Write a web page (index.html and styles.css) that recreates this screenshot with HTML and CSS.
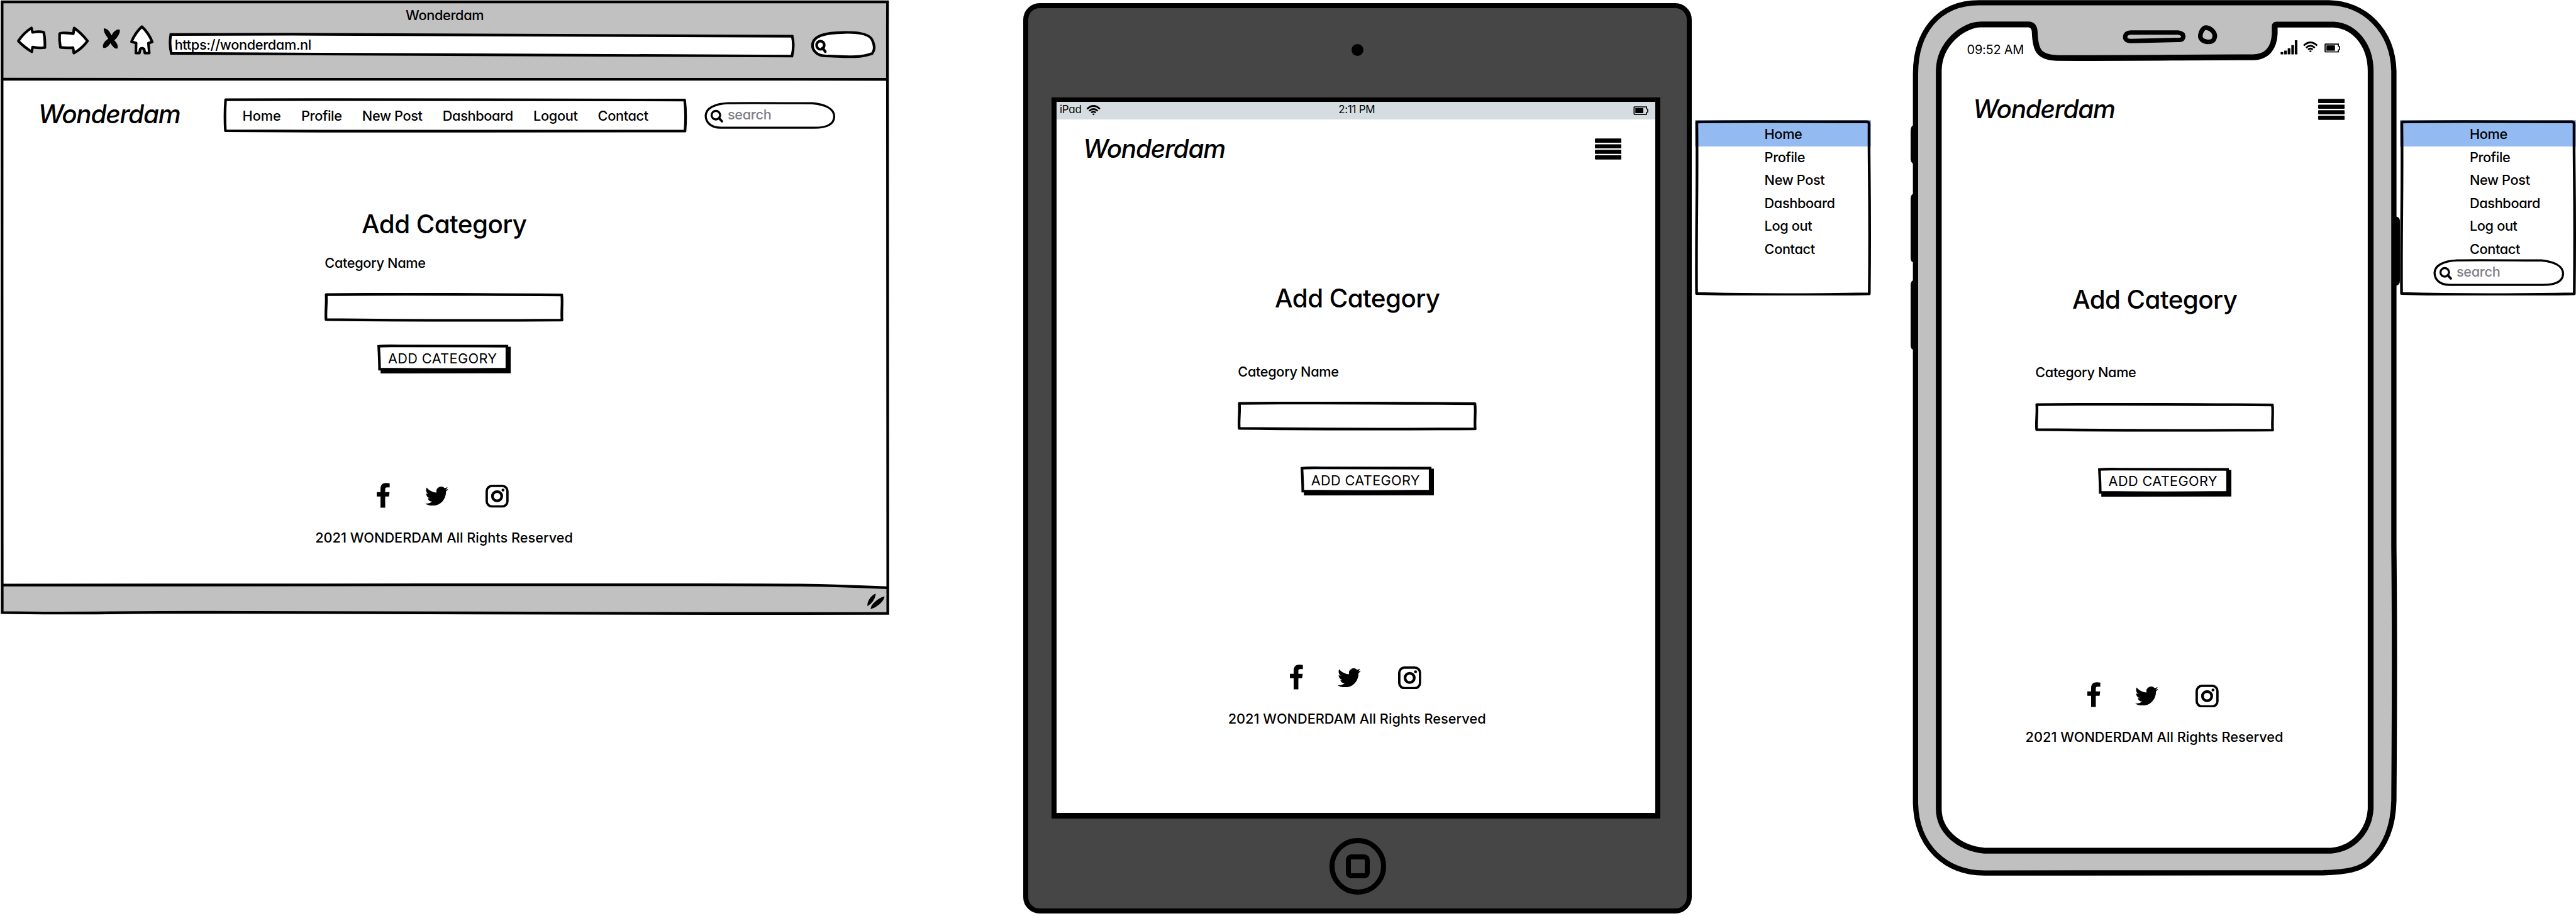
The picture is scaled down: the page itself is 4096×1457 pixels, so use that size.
FILE: index.html
```html
<!DOCTYPE html>
<html lang="en">
<head>
<meta charset="utf-8">
<title>Wonderdam – Add Category</title>
<link rel="stylesheet" href="styles.css">
</head>
<body>
<svg class="defs" aria-hidden="true">
  <symbol id="facebook" viewBox="0 0 24 46"><path d="M23.8 1V8.2H19C16.5 8.2 15.5 9.3 15.5 11.5V17H23.5L22.4 25H15.5V45.4H6.9V25H0V17H6.9V11C6.9 3.5 11 0 17.5 0.2Q21 .2 23.8 1Z"/></symbol>
  <symbol id="twitter" viewBox="0 2.2 24 19.6" preserveAspectRatio="none"><path d="M23.953 4.57a10 10 0 01-2.825.775 4.958 4.958 0 002.163-2.723c-.951.555-2.005.959-3.127 1.184a4.92 4.92 0 00-8.384 4.482C7.69 8.095 4.067 6.13 1.64 3.162a4.822 4.822 0 00-.666 2.475c0 1.71.87 3.213 2.188 4.096a4.904 4.904 0 01-2.228-.616v.06a4.923 4.923 0 003.946 4.827 4.996 4.996 0 01-2.212.085 4.936 4.936 0 004.604 3.417 9.867 9.867 0 01-6.102 2.105c-.39 0-.779-.023-1.17-.067a13.995 13.995 0 007.557 2.209c9.053 0 13.998-7.496 13.998-13.985 0-.21 0-.42-.015-.63A9.935 9.935 0 0024 4.59z"/></symbol>
  <symbol id="instagram" viewBox="0 0 42.4 42"><rect x="2.2" y="2.2" width="38" height="37.6" rx="9.5" fill="none" stroke="#000" stroke-width="4.4"/><circle cx="21.2" cy="21" r="8.5" fill="none" stroke="#000" stroke-width="5"/><circle cx="32" cy="9.8" r="2.7"/></symbol>
  <symbol id="wifi" viewBox="0 0 27 20"><g fill="none" stroke="#000" stroke-width="3.2"><path d="M1.2 7.6Q13.5-4 25.8 7.6"/><path d="M5.4 11.4Q13.5 4 21.6 11.4"/><path d="M9.2 14.8Q13.5 11 17.8 14.8"/></g><path d="M11 17.2Q13.5 15.6 16 17.2L13.5 20Z"/></symbol>
  <symbol id="battery" viewBox="0 0 29 17"><path d="M2 1.2H25.4V4.6L27.7 6V11L25.4 12.4V15.8H2Q1.2 15.8 1.2 15V2Q1.2 1.2 2 1.2Z" fill="none" stroke="#000" stroke-width="2"/><rect x="3.6" y="3.6" width="15.6" height="9.8"/></symbol>
  <symbol id="bars" viewBox="0 0 49 39"><rect y=".4" width="49" height="7.6" rx="1.5"/><rect y="10.8" width="49" height="7.6" rx="1.5"/><rect y="21" width="49" height="7.6" rx="1.5"/><rect y="31.2" width="49" height="7.6" rx="1.5"/></symbol>
  <symbol id="box-input" viewBox="0 0 437 53" preserveAspectRatio="none"><path d="M3 3C140 1.6 300 2.6 434 3.6C436 18 433 34 434.5 50C300 51 150 51 2.8 49.2C1.4 34 4.4 18 3 3Z" fill="#fff" stroke="#000" stroke-width="5" stroke-linejoin="round"/></symbol>
  <symbol id="box-button" viewBox="0 0 244 53" preserveAspectRatio="none"><path d="M6 4H244V52.6L6 53Z"/><path d="M2.5 3.2Q10 2.2 40 2.6L237 3V45Q120 46.6 4 45Q4 30 2.5 3.2Z" fill="#fff" stroke="#000" stroke-width="4.8"/></symbol>
  <symbol id="box-menu" viewBox="0 0 322 321" preserveAspectRatio="none"><path d="M3.5 3.4C100 2 240 3.4 315 3.2Q318.6 3.4 318.6 7C318 100 321 140 319 318C200 320 80 319.5 3 317.4C2 200 5 120 3.5 3.4Z" fill="none" stroke="#000" stroke-width="5" stroke-linejoin="round"/></symbol>
  <symbol id="box-search" viewBox="0 0 240 50"><path d="M44 2.4C90 1.6 150 2.6 198 2.6C222 5 237.6 13 237.6 27C237 42 222 47.6 200 47.4H30C10 47.4 2.4 36 2.4 25C3 12 18 3.4 44 2.4Z" fill="#fff" stroke="#000" stroke-width="3.8"/><circle cx="21" cy="24.4" r="7.8" fill="none" stroke="#000" stroke-width="3.8"/><path d="M26.5 29.5L32.2 35.6" stroke="#000" stroke-width="4.4" stroke-linecap="round"/></symbol>
</svg>

<main class="board">

  <section class="browser">
    <svg class="frame" viewBox="0 0 1627 1126">
      <path d="M4 4H1623V145H4Z" fill="#c1c1c1"/>
      <path d="M4 1071C120 1073 600 1069 1000 1069.6S1450 1068 1623 1075V1122H4Z" fill="#c1c1c1"/>
      <g fill="none" stroke="#000" stroke-width="5">
        <path d="M3.8 3.5H1623.5C1622 400 1625 800 1624 1122.4C1200 1123.4 700 1121.6 450 1120.6S160 1123.6 4 1121C5 700 2.6 400 3.8 3.5Z"/>
        <path d="M4 145C400 147 900 145.6 1623 145.2"/>
        <path d="M5 1070.6C120 1073 600 1069.6 1000 1070S1450 1068 1623 1075.4"/>
      </g>
      <path d="M1601 1087.5C1594 1090 1587 1101 1587.5 1107.8C1594 1104 1600 1096 1601 1087.5ZM1617 1092.5C1607 1095 1594 1106 1593.5 1113.5C1604 1110 1615 1101 1617 1092.5Z" stroke="#000" stroke-width="1.6"/>
    </svg>
    <header class="chrome">
      <div class="chrome-title">Wonderdam</div>
      <div class="toolbar">
        <svg class="tool back" viewBox="28 44 62 64"><path d="M34 75.3Q44 60 58 51.5L60 59.5Q72 57 80.5 59.5Q83 72 82.5 87.5Q72 89 60 86.4L58.5 95Q44 86 34 75.3Z"/></svg>
        <svg class="tool forward" viewBox="100 44 66 64"><path d="M135.5 51.5Q149 61 160 75.3Q150 89 135 97.5L133.5 87.5Q122 88.5 110.5 87Q108 74 109 62Q110 58.5 134 62Z"/></svg>
        <svg class="tool stop" viewBox="184 44 38 64"><path d="M190 52Q198 52 204 65Q209 54 218 54Q221 56 217 64Q213 71 209 74Q217 82 215 89Q209 91 202 79Q196 89 189 88Q186 84 192 76L198 71Q188 58 190 52Z"/></svg>
        <svg class="tool home" viewBox="234 44 52 64"><path d="M260 49Q272 60 279 77L272 79L273.5 97.5H265.5L264 90Q260 87 257 90L255.5 97.5H249L249.5 79L241 76.5Q248 60 260 49Z"/></svg>
        <div class="address">
          <svg class="frame" viewBox="308 44 1146 64"><path d="M312 63.5C700 61.6 1100 64 1449 66.6Q1453 84 1448.5 103C1000 103.4 600 100 313 98Q309 82 312 63.5Z" fill="#fff" stroke="#000" stroke-width="4.8"/></svg>
          https://wonderdam.nl
        </div>
        <svg class="tool find" viewBox="1482 44 124 64"><path d="M1545 59.6C1575 59 1592 64 1596 74C1601 86 1600 92 1596 98C1570 108 1540 103 1509 102.6C1494 102 1486 92 1486.4 82C1488 66 1508 60 1545 59.6Z"/><ellipse cx="1501" cy="83" rx="7" ry="7.6" fill="none"/><path d="M1505 88L1510 95" fill="none"/></svg>
      </div>
    </header>
    <div class="site-header">
      <div class="brand">Wonderdam</div>
      <nav class="nav">
        <svg class="frame" viewBox="409 180 847 63"><path d="M412 183C700 182 1000 184 1252 183.6Q1255 210 1252.6 240.4C1000 239 700 242 411.6 239.8Q410 210 412 183Z" fill="#fff" stroke="#000" stroke-width="4.8" stroke-linejoin="round"/></svg>
        <a class="first">Home</a><a>Profile</a><a>New Post</a><a>Dashboard</a><a>Logout</a><a>Contact</a>
      </nav>
      <div class="search"><svg class="frame"><use href="#box-search"/></svg>search</div>
    </div>
    <div class="form">
      <h1>Add Category</h1>
      <label>Category Name</label>
      <div class="input"><svg class="frame"><use href="#box-input"/></svg></div>
      <div class="button"><svg class="frame"><use href="#box-button"/></svg>ADD CATEGORY</div>
    </div>
    <footer class="footer">
      <div class="social"><svg class="fb"><use href="#facebook"/></svg><svg class="tw"><use href="#twitter"/></svg><svg class="ig"><use href="#instagram"/></svg></div>
      <p>2021 WONDERDAM All Rights Reserved</p>
    </footer>
  </section>

  <section class="tablet">
    <div class="camera"></div>
    <div class="screen">
      <div class="status">
        <span class="carrier">iPad</span><svg class="wifi"><use href="#wifi"/></svg>
        <span class="clock">2:11 PM</span>
        <svg class="battery"><use href="#battery"/></svg>
      </div>
      <div class="site-header"><div class="brand">Wonderdam</div><svg class="burger"><use href="#bars"/></svg></div>
      <div class="form">
        <h1>Add Category</h1>
        <label>Category Name</label>
        <div class="input"><svg class="frame"><use href="#box-input"/></svg></div>
        <div class="button"><svg class="frame"><use href="#box-button"/></svg>ADD CATEGORY</div>
      </div>
      <footer class="footer">
        <div class="social"><svg class="fb"><use href="#facebook"/></svg><svg class="tw"><use href="#twitter"/></svg><svg class="ig"><use href="#instagram"/></svg></div>
        <p>2021 WONDERDAM All Rights Reserved</p>
      </footer>
    </div>
    <div class="home-button"><i></i></div>
  </section>

  <nav class="menu">
    <svg class="frame"><use href="#box-menu"/></svg>
    <a class="active">Home</a><a>Profile</a><a>New Post</a><a>Dashboard</a><a>Log out</a><a>Contact</a>
  </nav>

  <section class="phone">
    <svg class="frame" viewBox="3495 0 895 1604">
      <path d="M3504 228Q3495 228 3495 240V290Q3495 300 3504 301ZM3504 353Q3495 355 3495 363V472Q3495 481 3504 481ZM3504 511Q3495 513 3495 521V632Q3495 641 3504 641ZM4380 396Q4390 396 4390 404V514Q4390 523 4380 523Z"/>
      <path d="M3620 5C3545 5 3504 60 3504 135V1470C3506 1550 3560 1597 3630 1597.5C3800 1599 4000 1598 4250 1597C4290 1596 4320 1592 4338 1572C4366 1545 4378 1510 4379 1465C4380 1300 4381 1200 4379 1000V130C4377 55 4325 6 4260 5Z" fill="#c0c0c0" stroke="#000" stroke-width="9.6"/>
      <path d="M3624 44.8H3710Q3721 45 3722 58C3723 90 3728 105 3762 106C3900 107 4000 104.6 4122 104.8C4150 104 4160 84 4161 62V48Q4161 45 4164 45L4269 45C4310 48 4336.5 85 4336.5 130V1480C4334 1520 4306 1553 4264 1556.6H3630C3582 1552 3546.5 1520 3546.5 1480V128C3548 80 3590 45 3624 44.8Z" fill="#fff" stroke="#000" stroke-width="10.6"/>
      <path d="M3898 59.6H3984Q3994 61 3994 67Q3993 74 3984 73L3898 75Q3887 75 3887.5 67Q3888 60 3898 59.6Z" fill="#c0c0c0" stroke="#000" stroke-width="8"/>
      <path d="M4036 50.5C4046 52 4052 60 4051.4 67C4050 76 4044 77 4038 76.6C4029 76 4024 71 4025 64C4026 58 4030 50 4036 50.5Z" fill="#c0c0c0" stroke="#000" stroke-width="8.4"/>
    </svg>
    <div class="status">
      <span class="clock">09:52 AM</span>
      <svg class="signal" viewBox="0 0 32 26"><path d="M.4 21.6h4.8V26H.4ZM7 19h4.8v7H7ZM13.4 14.6h4.8V26h-4.8ZM20 9h4.8v17H20ZM26.4 0h4.8v26h-4.8Z"/></svg>
      <svg class="wifi"><use href="#wifi"/></svg>
      <svg class="battery"><use href="#battery"/></svg>
    </div>
    <div class="site-header"><div class="brand">Wonderdam</div><svg class="burger"><use href="#bars"/></svg></div>
    <div class="form">
      <h1>Add Category</h1>
      <label>Category Name</label>
      <div class="input"><svg class="frame"><use href="#box-input"/></svg></div>
      <div class="button"><svg class="frame"><use href="#box-button"/></svg>ADD CATEGORY</div>
    </div>
    <footer class="footer">
      <div class="social"><svg class="fb"><use href="#facebook"/></svg><svg class="tw"><use href="#twitter"/></svg><svg class="ig"><use href="#instagram"/></svg></div>
      <p>2021 WONDERDAM All Rights Reserved</p>
    </footer>
  </section>

  <nav class="menu">
    <svg class="frame"><use href="#box-menu"/></svg>
    <a class="active">Home</a><a>Profile</a><a>New Post</a><a>Dashboard</a><a>Log out</a><a>Contact</a>
    <div class="search"><svg class="frame"><use href="#box-search"/></svg>search</div>
  </nav>
</main>
</body>
</html>
```
FILE: styles.css
```css
* { box-sizing: border-box; }
body { margin: 0; background: #fff; overflow: hidden; }
.defs { position: absolute; width: 0; height: 0; }

.board {
  zoom: 0.86927;
  display: flex;
  align-items: flex-start;
  width: 4712px;
  height: 1676px;
  color: #000;
  font: 500 25px/30px Inter, "Open Sans", sans-serif;
  font-feature-settings: "cv11";
  letter-spacing: -.4px;
  white-space: nowrap;
}
.board svg { display: block; flex: none; }
.frame { position: absolute; inset: 0; width: 100%; height: 100%; z-index: -1; overflow: visible; }
.browser, .phone, .menu, .nav, .address, .search, .input, .button { position: relative; isolation: isolate; }
h1, p, label { margin: 0; display: block; }

/* shared page parts */
.site-header { display: flex; align-items: flex-start; }
.brand { font-size: 46.5px; line-height: 60px; height: 56px; font-style: italic; letter-spacing: -1.4px; margin-left: -3px; }
.burger { width: 49px; height: 39px; }
.search { width: 240px; height: 50px; padding: 8px 0 0 43px; color: #7f7f8a; }
.form { width: 437px; display: flex; flex-direction: column; }
h1 { font-size: 46.5px; line-height: 60px; height: 56px; font-weight: 500; letter-spacing: -.7px; text-align: center; }
.input { height: 52.5px; margin-top: 40.4px; }
.button { width: 244px; height: 53px; padding: 9.6px 6px 0 0; text-align: center; align-self: center; font-weight: 400; letter-spacing: .4px; }
.footer { width: 470px; text-align: center; letter-spacing: 0; }
.social { display: flex; align-items: flex-start; height: 46px; padding-left: 113px; }
.fb { width: 24px; height: 46px; }
.tw { width: 42.4px; height: 35px; margin: 7px 0 0 64px; }
.ig { width: 42.4px; height: 42px; margin: 3.7px 0 0 68px; }
.footer p { margin-top: 38.8px; }

/* desktop browser */
.browser { width: 1627px; height: 1126px; display: flex; flex-direction: column; align-items: center; flex: none; }
.chrome { width: 100%; height: 145px; padding-top: 12.5px; }
.chrome-title { text-align: center; height: 31.5px; }
.toolbar { display: flex; height: 64px; padding-left: 28px; }
.tool { height: 64px; fill: #fff; stroke: #000; stroke-width: 4.8; stroke-linejoin: round; stroke-linecap: round; }
.back { width: 62px; }
.forward { width: 66px; margin-left: 10px; }
.stop { width: 38px; margin-left: 18px; fill: #000; stroke: none; }
.home { width: 52px; margin-left: 12px; }
.address { width: 1146px; margin-left: 22px; padding: 22.4px 0 0 11.5px; }
.find { width: 124px; margin-left: 28px; }
.browser .site-header { width: 100%; padding: 35px 0 0 73px; height: 103px; }
.nav { width: 847px; height: 63px; margin-left: 83px; padding: 16.2px 0 0 34.5px; display: flex; gap: 37px; }
.nav .first { letter-spacing: 0; }
.browser .brand { width: 256px; }
.browser .search { margin: 6px 0 0 32px; }
.browser .form { margin: 132.8px 2px 0 0; }
.browser label { margin-top: 29.4px; }
.browser .button { margin-top: 41.8px; }
.browser .footer { margin: 200px 4px 0 0; }

/* tablet */
.tablet {
  flex: none; display: flex; flex-direction: column; align-items: center;
  width: 1223px; height: 1666px; margin: 6px 0 0 245px;
  background: #464646; border: 10px solid #000; border-radius: 30px;
}
.camera { width: 22px; height: 22px; margin-top: 65px; border-radius: 50%; background: #000; }
.screen {
  align-self: flex-start; width: 1114px; height: 1320px; margin: 76px 0 0 42px;
  background: #fff; border: 10px solid #000; border-top-width: 9px; border-bottom-width: 11px;
}
.status { display: flex; font-size: 19.5px; line-height: 24px; font-weight: 400; letter-spacing: -.3px; }
.tablet .status { height: 32px; background: #d6dde0; padding: 2.7px 12px 0 6px; }
.carrier { width: 40px; }
.tablet .wifi { width: 27px; height: 19px; margin: 3.6px 0 0 8.5px; }
.tablet .clock { width: 68px; margin-left: 434.5px; }
.tablet .battery { width: 28px; height: 16px; margin: 5.4px 0 0 auto; }
.tablet .site-header { padding: 24.8px 62px 0 52px; justify-content: space-between; }
.tablet .burger { margin-top: 10.5px; }
.tablet .form { margin: 218px 0 0 332px; }
.tablet label, .phone label { margin-top: 92.1px; }
.tablet .button, .phone .button { margin: 66px 0 0 36px; }
.tablet .footer { margin: 308.6px 0 0 314px; }
.home-button {
  display: grid; place-items: center; width: 104px; height: 104px; margin-top: 35px;
  border: 10px solid #000; border-radius: 50%;
}
.home-button i { width: 43px; height: 44px; border: 10px solid #000; border-radius: 10px; }

/* drop-down menus */
.menu { flex: none; width: 322px; height: 321px; margin: 220px 0 0 5px; }
.menu a { display: block; height: 42.1px; padding: 4.1px 0 0 127.5px; }
.menu a.active { height: 48px; padding-top: 10.6px; background: #94baf2; }
.menu a.active + a { padding-top: 4.9px; }
.menu a:not(.active) { position: relative; }
.menu .active { position: relative; z-index: -2; }
.phone + .menu { margin-left: 0; }
.menu .search { margin: -4px 0 0 60.5px; }

/* phone */
.phone { flex: none; width: 895px; height: 1604px; margin-left: 73px; padding-top: 76.6px; }
.phone .status { font-size: 23px; line-height: 28px; height: 28px; padding-left: 103px; }
.phone .clock { width: 104px; }
.signal { width: 32px; height: 26px; margin: -2.6px 0 0 469px; }
.phone .wifi { width: 27px; height: 20px; margin: -.6px 0 0 10px; }
.phone .battery { width: 29px; height: 17px; margin: 2.6px 0 0 12px; }
.phone .site-header { padding: 66.2px 101px 0 117px; justify-content: space-between; }
.phone .burger { margin-top: 10.4px; }
.phone .form { margin: 291.8px 0 0 228px; }
.phone .footer { margin: 340.2px 0 0 210px; }
```
